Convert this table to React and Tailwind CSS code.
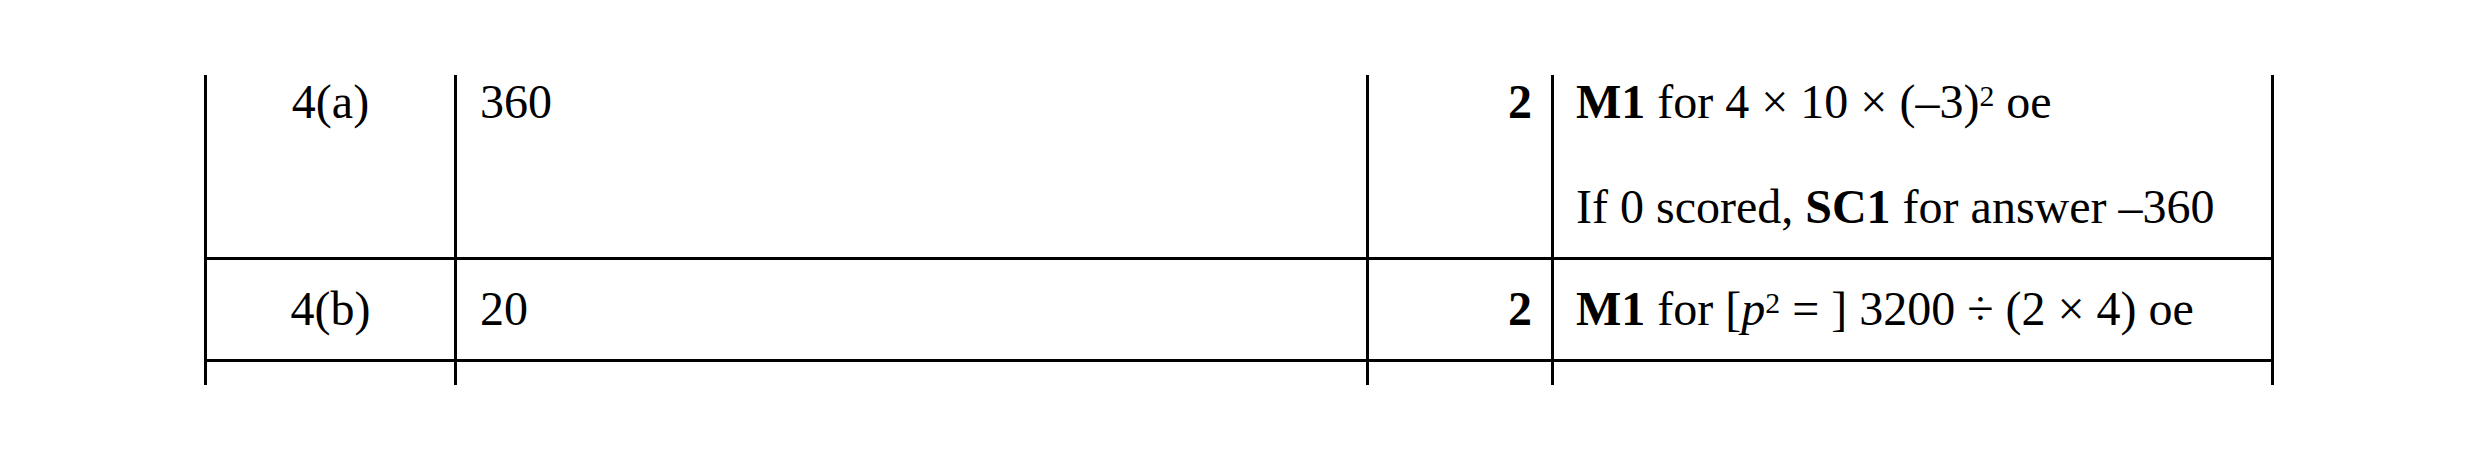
function Sup({ children }) {
    return <sup className="text-[0.62em] top-[-0.42em]">{children}</sup>;
}

const rows = [
    {
        part: "4(a)",
        answer: "360",
        marks: "2",
        pad: "pt-px pb-6",
        notes: [
            <>
                <b>M1</b> for 4 × 10 × (–3)<Sup>2</Sup> oe
            </>,
            <>
                If 0 scored, <b>SC1</b> for answer –360
            </>,
        ],
    },
    {
        part: "4(b)",
        answer: "20",
        marks: "2",
        pad: "pt-[23px] pb-6",
        notes: [
            <>
                <b>M1</b> for [<i>p</i>
                <Sup>2</Sup> = ] 3200 ÷ (2 × 4) oe
            </>,
        ],
    },
];

function App() {
    return (
        <div className="min-h-[461px] bg-white pt-[75px] pl-[204px] font-['Liberation_Serif','Times_New_Roman',serif] text-black">
            <div className="w-[2070px] text-[48px] leading-[52px]">
                {rows.map((row) => (
                    <div key={row.part} className="flex border-b-[3px] border-black">
                        <div className={`w-[250px] border-l-[3px] border-black text-center ${row.pad}`}>{row.part}</div>
                        <div className={`w-[912px] border-l-[3px] border-black pl-[23px] ${row.pad}`}>{row.answer}</div>
                        <div className={`w-[185px] border-l-[3px] border-black pr-[19px] text-right font-bold ${row.pad}`}>
                            {row.marks}
                        </div>
                        <div className={`w-[723px] border-x-[3px] border-black pl-[22px] flex flex-col gap-[53px] ${row.pad}`}>
                            {row.notes.map((note, i) => (
                                <p key={i}>{note}</p>
                            ))}
                        </div>
                    </div>
                ))}
                <div className="flex h-[23px]">
                    <div className="w-[250px] border-l-[3px] border-black" />
                    <div className="w-[912px] border-l-[3px] border-black" />
                    <div className="w-[185px] border-l-[3px] border-black" />
                    <div className="w-[723px] border-x-[3px] border-black" />
                </div>
            </div>
        </div>
    );
}

export default App;
